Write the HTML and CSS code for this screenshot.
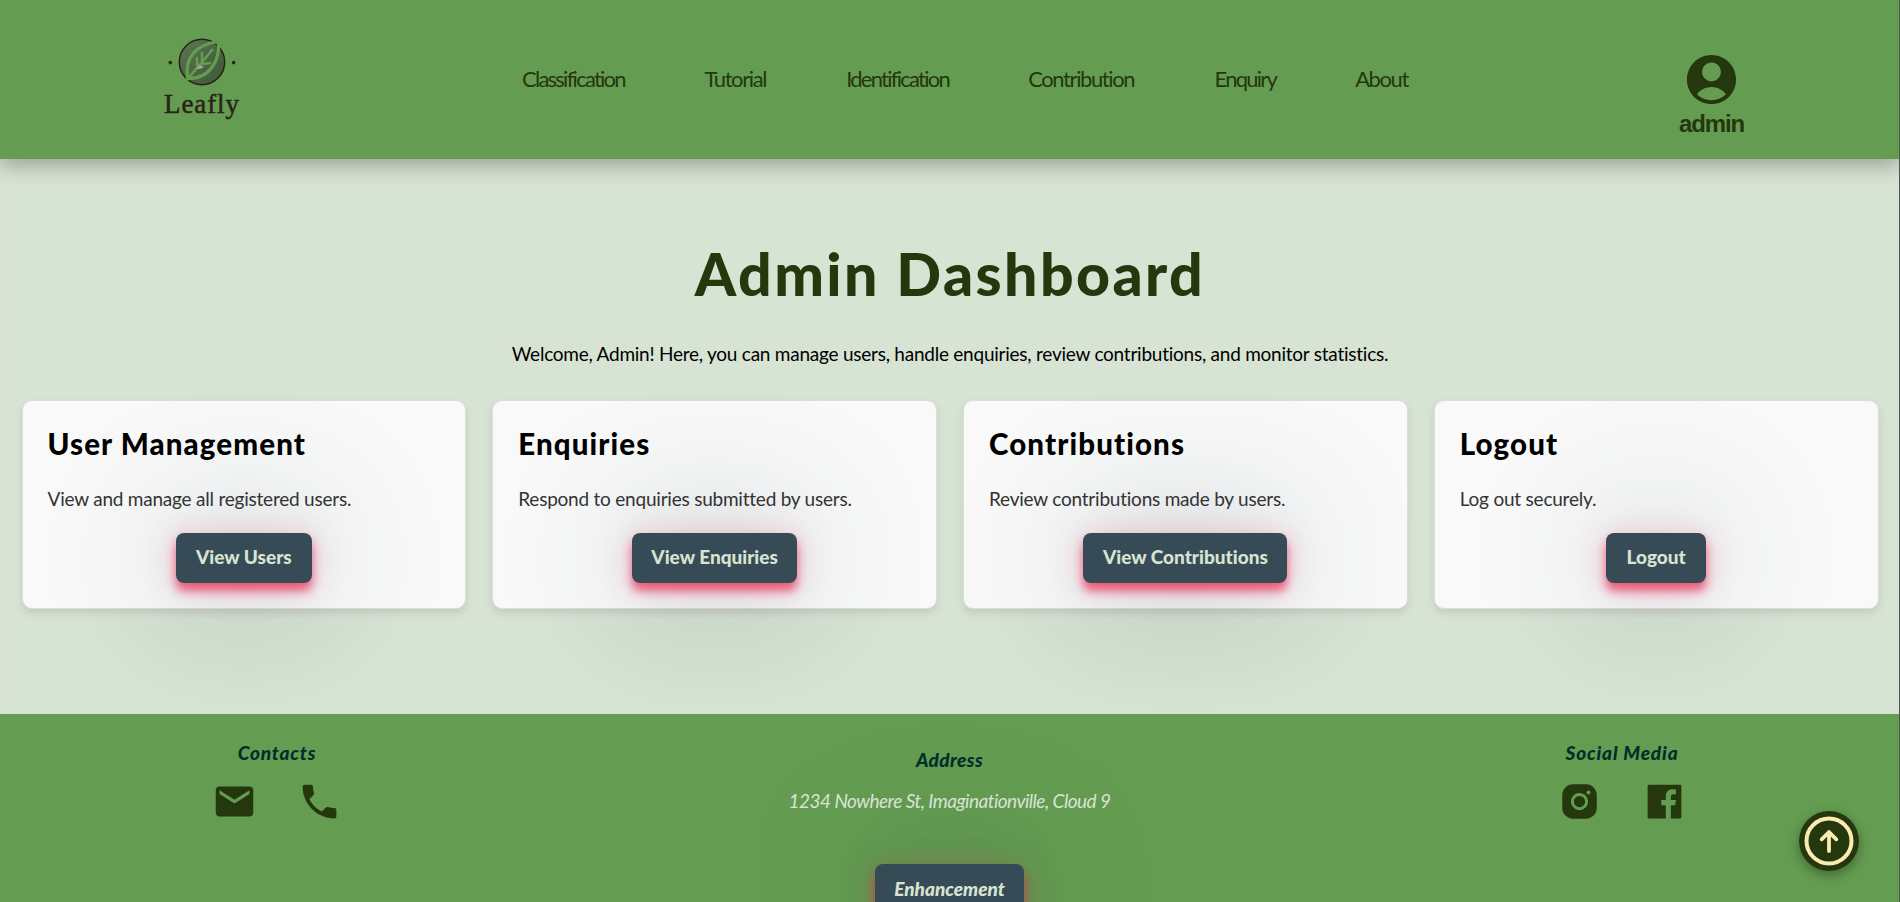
FILE: index.html
```html
<!DOCTYPE html>
<html lang="en">
<head>
<meta charset="utf-8">
<title>Admin Dashboard</title>
<link rel="stylesheet" href="styles.css">
</head>
<body>
<header class="header">
  <a class="logo"><svg width="90" height="90" viewBox="157 32 90 90">
    <defs><linearGradient id="g" x1="0" y1="0" x2="1" y2="1"><stop offset="0" stop-color="#5d7657"/><stop offset=".5" stop-color="#4b6644"/><stop offset="1" stop-color="#3d5a38"/></linearGradient></defs>
    <circle cx="170.3" cy="62.6" r="1.8" fill="#2c2119"/><circle cx="233.6" cy="62.6" r="1.8" fill="#2c2119"/>
    <circle cx="202" cy="62" r="22.7" fill="url(#g)" stroke="#2c2119" stroke-width="1.5"/>
    <path d="M187.500 78.500C185 58 194 45 218.500 41.500C220 59 211 79 187.500 78.500Z" fill="none" stroke="#649d51" stroke-width="3.200"/>
    <path d="M186 81L213 49M197 66V57M202 61V52M202 64L211 63" fill="none" stroke="#649d51" stroke-width="2.6"/>
    <path d="M196 69L200 65L204 67L200 69Z" fill="#a7a78b"/>
    <text class="wordmark" x="164" y="112.7">Leafly</text>
  </svg></a>
  <nav class="nav"><a>Classification</a><a>Tutorial</a><a>Identification</a><a>Contribution</a><a>Enquiry</a><a>About</a></nav>
  <a class="profile">
    <svg class="avatar" viewBox="0 0 24 24"><path d="M12 2C6.48 2 2 6.48 2 12s4.48 10 10 10 10-4.48 10-10S17.52 2 12 2zm0 3.100c2.100 0 3.800 1.700 3.800 3.800S14.100 12.700 12 12.700 8.200 11 8.200 8.900 9.900 5.100 12 5.100zm0 15.300c-2.300 0-4.400-.9-5.900-2.400C7.300 16.100 9.800 15 12 15s4.700 1.100 5.900 3c-1.500 1.500-3.600 2.400-5.900 2.400z"/></svg>
    <span>admin</span>
  </a>
</header>
<main class="main">
  <h1>Admin Dashboard</h1>
  <p class="welcome">Welcome, Admin! Here, you can manage users, handle enquiries, review contributions, and monitor statistics.</p>
  <section class="cards">
    <article class="card"><h2>User Management</h2><p>View and manage all registered users.</p><a class="btn w1">View Users</a></article>
    <article class="card"><h2>Enquiries</h2><p>Respond to enquiries submitted by users.</p><a class="btn w2">View Enquiries</a></article>
    <article class="card"><h2>Contributions</h2><p>Review contributions made by users.</p><a class="btn w3">View Contributions</a></article>
    <article class="card"><h2>Logout</h2><p>Log out securely.</p><a class="btn w4">Logout</a></article>
  </section>
</main>
<footer class="footer">
  <section class="side"><h3>Contacts</h3><div class="icons">
    <svg viewBox="0 0 24 24"><path d="M20 4H4c-1.100 0-1.990.9-1.990 2L2 18c0 1.100.9 2 2 2h16c1.100 0 2-.9 2-2V6c0-1.100-.9-2-2-2zm0 4l-8 5-8-5V6l8 5 8-5v2z"/></svg>
    <svg viewBox="0 0 24 24"><path d="M6.620 10.790c1.440 2.830 3.760 5.140 6.590 6.590l2.200-2.200c.270-.270.670-.360 1.020-.240 1.120.370 2.330.570 3.570.570.550 0 1 .450 1 1V20c0 .550-.450 1-1 1-9.390 0-17-7.610-17-17 0-.550.450-1 1-1h3.500c.550 0 1 .450 1 1 0 1.250.2 2.450.570 3.570.110.350.030.740-.250 1.020l-2.200 2.200z"/></svg>
  </div></section>
  <section class="address"><h3>Address</h3><p>1234 Nowhere St, Imaginationville, Cloud 9</p><a class="btn w5">Enhancement</a></section>
  <section class="side"><h3>Social Media</h3><div class="icons">
    <svg viewBox="0 0 24 24"><path fill-rule="evenodd" d="M8.500 2.800h7a5.700 5.700 0 0 1 5.700 5.700v7a5.700 5.700 0 0 1-5.700 5.700h-7a5.700 5.700 0 0 1-5.700-5.700v-7a5.700 5.700 0 0 1 5.700-5.700zM12 7.400a4.600 4.600 0 1 0 0 9.200 4.600 4.600 0 0 0 0-9.200zm0 1.600a3 3 0 1 1 0 6 3 3 0 0 1 0-6zM16.800 6.100a1.050 1.050 0 1 0 0 2.100 1.050 1.050 0 0 0 0-2.100z"/></svg>
    <svg viewBox="0 0 24 24"><path d="M20.400 3H3.600a.6.6 0 0 0-.6.600v16.800a.6.6 0 0 0 .6.600h9.100v-7h-2.400v-2.800h2.400V9.100c0-2.300 1.500-3.600 3.600-3.600l1.800.1v2.500h-1.300c-1.100 0-1.400.6-1.400 1.300v1.800h2.700l-.4 2.800h-2.300v7h5a.6.6 0 0 0 .6-.6V3.600a.6.6 0 0 0-.6-.6z"/></svg>
  </div></section>
</footer>
<a class="top"><svg width="60" height="60" viewBox="0 0 60 60"><circle cx="30" cy="30" r="30" fill="#25370d"/><circle cx="30" cy="30" r="22.500" fill="none" stroke="#faebb1" stroke-width="4"/><path d="M30 40V21M22.700 28.300L30 21l7.300 7.300" fill="none" stroke="#faebb1" stroke-width="3.800" stroke-linecap="round" stroke-linejoin="round"/></svg></a>
</body>
</html>
```
FILE: styles.css
```css
* { box-sizing: border-box; }
body { margin: 0; width: 1900px; height: 902px; overflow: hidden; border-right: 1px solid #4a5751; background: #d7e3d3; font-family: Lato, sans-serif; font-variant-ligatures: none; color: #000; }
h1, h2, h3, p { margin: 0; white-space: nowrap; }

.header { position: relative; z-index: 2; display: flex; height: 159px; background: #649d51; box-shadow: 0 6px 20px rgba(0,0,0,.3); color: #25370d; }
.logo { margin: 32px 0 0 157px; width: 90px; height: 90px; }
.wordmark { font: 27px "Liberation Serif", serif; letter-spacing: .9px; fill: #2c2119; stroke: #2c2119; stroke-width: .5px; }
.nav { display: grid; grid-template-columns: 182.500px 141.700px 182px 186.300px 140.700px 57px; margin-left: 275px; width: 890px; font-size: 22px; line-height: 40px; padding-top: 59px; white-space: nowrap; letter-spacing: -1.750px; }
.nav a:nth-child(2), .nav a:nth-child(4), .nav a:nth-child(6) { letter-spacing: -1.400px; }
.profile { display: flex; flex-direction: column; align-items: center; margin-left: 260px; width: 79px; padding-top: 49.500px; font: bold 24px/30px "Liberation Sans", sans-serif; letter-spacing: -1.100px; }
.avatar { width: 59px; height: 59px; fill: #25370d; }

.main { height: 555px; overflow: hidden; padding: 81px 20.500px 0 21.500px; background: linear-gradient(#ddd, #ddd) 0 0 / 1px 530px no-repeat; }
h1 { text-align: center; font-size: 59px; font-weight: 900; line-height: 68px; letter-spacing: 2.400px; color: #25370d; }
.welcome { text-align: center; font-size: 19px; line-height: 30px; letter-spacing: -.240px; margin-top: 31px; }
.cards { display: grid; grid-template-columns: repeat(4, 1fr); gap: 26px; margin-top: 30.500px; }
.card { height: 209px; padding: 24px 25px; border: 1px solid #ddd; border-radius: 10px; background: #f9f9f9; box-shadow: 0 4px 8px rgba(0,0,0,.1); }
.card h2 { font-size: 29.500px; line-height: 38px; padding-bottom: 2px; font-weight: 900; letter-spacing: 1.100px; }
.card p { font-size: 19px; line-height: 28px; margin-top: 20px; letter-spacing: -.220px; color: #333; }

.btn { display: flex; align-items: center; justify-content: center; height: 50px; margin: 20px auto 0; padding-bottom: 2px; border-radius: 8px; background: #364b55; color: #d8e3d3; font-size: 19px; font-weight: 900; white-space: nowrap; box-shadow: 0 8px 10px rgba(230,30,75,.65), 0 4px 30px rgba(230,30,75,.25), 0 0 130px 0 rgba(44,70,85,.38); }
.w1 { width: 136px; }
.w2 { width: 165px; }
.w3 { width: 204px; }
.w4 { width: 100px; }
.w5 { width: 149px; }

.footer { display: flex; height: 188px; overflow: hidden; background: #649d51; font-style: italic; }
.footer h3 { font-size: 19px; line-height: 26px; padding-bottom: 2px; font-weight: 900; letter-spacing: .850px; color: #002f2b; }
.side { width: 554px; text-align: center; padding-top: 26px; }
.icons { display: flex; justify-content: center; gap: 40px; margin-top: 11px; }
.icons svg { width: 45px; height: 45px; fill: #25370d; }
.address { width: 791px; text-align: center; padding-top: 33px; }
.footer .address h3 { letter-spacing: .400px; }
.address p { font-size: 19px; line-height: 28px; margin-top: 12px; letter-spacing: -.520px; color: #d8e3d3; }
.address .btn { margin-top: 49px; }

.top { position: fixed; left: 1799px; top: 811px; width: 60px; height: 60px; border-radius: 50%; box-shadow: 0 4px 12px rgba(0,0,0,.35); }
```
